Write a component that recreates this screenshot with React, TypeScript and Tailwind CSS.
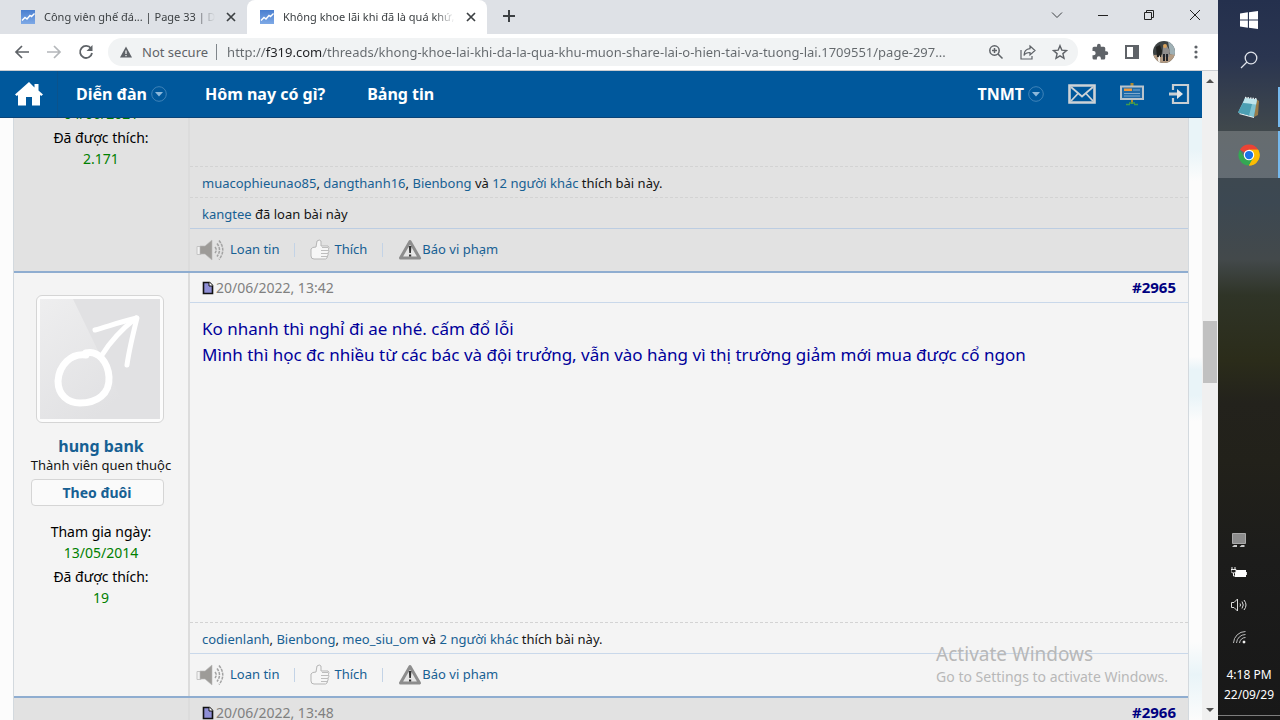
import type { ReactNode } from "react";
import { useState } from "react";

const UI = "font-['Noto_Sans','Open_Sans',sans-serif]";

const tabs = [
  { id: 1, title: "Công viên ghế đá... | Page 33 | Di", active: false },
  { id: 2, title: "Không khoe lãi khi đã là quá khứ,", active: true },
];

const url =
  "http://f319.com/threads/khong-khoe-lai-khi-da-la-qua-khu-muon-share-lai-o-hien-tai-va-tuong-lai.1709551/page-297...";

function Favicon() {
  return (
    <svg className="w-4 h-4 shrink-0" viewBox="0 0 16 16">
      <defs>
        <linearGradient id="fav" x1="0" y1="0" x2="0" y2="1">
          <stop offset="0" stopColor="#4a7fd0" />
          <stop offset="1" stopColor="#7ea9e6" />
        </linearGradient>
      </defs>
      <rect x="1" y="1" width="14" height="14" fill="url(#fav)" />
      <path d="M2 11.5 5 8.500l2 1.500 3-3.500 1.500 1L14.500 4.500" fill="none" stroke="#fff" strokeWidth="1.400" />
    </svg>
  );
}

function CloseIcon() {
  return (
    <svg className="w-3 h-3" viewBox="0 0 12 12" fill="none" stroke="#3c4043" strokeWidth="1.700">
      <path d="M2 2l8 8M10 2l-8 8" />
    </svg>
  );
}

function TabStrip() {
  return (
    <div className="h-[34px] bg-[#dee1e6] flex items-start shrink-0">
      <div className="flex h-full">
        {tabs.map((tab) => (
          <div key={tab.id}
            className={`flex items-center h-full pr-2 ${tab.active ? "w-60 pl-3 bg-white rounded-t-lg" : "w-[247px] pl-5"}`}>
            <Favicon />
            <button className="ml-2 flex-1 min-w-0 overflow-hidden whitespace-nowrap text-left text-[11px] text-[#3c4043] [mask-image:linear-gradient(90deg,#000_88%,transparent)]">
              {tab.title}
            </button>
            <button aria-label="Close tab" className="w-4 h-4 ml-2 flex items-center justify-center">
              <CloseIcon />
            </button>
          </div>
        ))}
      </div>
      <button aria-label="New tab" className="w-8 h-8 ml-1.5 flex items-center justify-center">
        <svg className="w-3.5 h-3.5" viewBox="0 0 14 14" stroke="#3c4043" strokeWidth="2"><path d="M7 1v12M1 7h12" /></svg>
      </button>
      <div className="ml-auto flex h-[29px]">
        <button aria-label="Search tabs" className="w-[46px] flex items-center justify-center">
          <svg className="w-3 h-3" viewBox="0 0 12 12" fill="none" stroke="#3c4043"><path d="M1 3.500l5 5 5-5" /></svg>
        </button>
        <button aria-label="Minimize" className="w-[46px] flex items-center justify-center">
          <svg className="w-3 h-3" viewBox="0 0 12 12" fill="none" stroke="#222"><path d="M1 6.500h10" /></svg>
        </button>
        <button aria-label="Restore" className="w-[46px] flex items-center justify-center">
          <svg className="w-3 h-3" viewBox="0 0 12 12" fill="none" stroke="#222"><path d="M1.500 3.500h7v7h-7zM3.500 3.500v-2h7v7h-2" /></svg>
        </button>
        <button aria-label="Close" className="w-[46px] flex items-center justify-center">
          <svg className="w-3 h-3" viewBox="0 0 12 12" fill="none" stroke="#222"><path d="M1 1l10 10M11 1L1 11" /></svg>
        </button>
      </div>
    </div>
  );
}

function ToolButton({ label, children }: { label: string; children: ReactNode }) {
  return (
    <button aria-label={label} className="w-8 h-7 flex items-center justify-center text-[#5f6368]">
      {children}
    </button>
  );
}

function Toolbar() {
  const [address, setAddress] = useState(url);
  return (
    <div className="h-[37px] bg-white border-b border-[#c9ccd1] flex items-center pl-1.5 pr-1.5 shrink-0">
      <ToolButton label="Back">
        <svg className="w-4 h-4" viewBox="0 0 16 16" fill="none" stroke="currentColor" strokeWidth="1.700"><path d="M15 8H2.500M8 2L2 8l6 6" /></svg>
      </ToolButton>
      <ToolButton label="Forward">
        <svg className="w-4 h-4 text-[#b4b7ba]" viewBox="0 0 16 16" fill="none" stroke="currentColor" strokeWidth="1.700"><path d="M1 8h12.500M8 2l6 6-6 6" /></svg>
      </ToolButton>
      <ToolButton label="Reload">
        <svg className="w-4 h-4" viewBox="0 0 16 16">
          <path d="M13 4.500A6 6 0 1 0 14 9" fill="none" stroke="currentColor" strokeWidth="1.800" />
          <path d="M14.500 1v6h-6z" fill="currentColor" />
        </svg>
      </ToolButton>
      <div className="ml-1.5 flex-1 min-w-0 h-7 rounded-full bg-[#f1f3f4] flex items-center pl-3 pr-0.5">
        <svg className="w-3 h-3 shrink-0" viewBox="0 0 12 12">
          <path d="M6 .5L12 11.500H0z" fill="#5f6368" />
          <path d="M5.400 4.500h1.200v3.500H5.400zM5.400 9h1.200v1.200H5.400z" fill="#fff" />
        </svg>
        <label htmlFor="address" className="ml-2.5 pr-2 border-r border-[#80868b] text-[13px] leading-4 text-[#5f6368] whitespace-nowrap">
          Not secure
        </label>
        <input id="address" value={address} onChange={(e) => setAddress(e.target.value)}
          className="ml-2.5 flex-1 min-w-0 h-6 text-[13px] outline-none text-transparent bg-clip-text bg-[linear-gradient(90deg,#63686c_38px,#202124_38px,#202124_95px,#63686c_95px)]" />
        <ToolButton label="Zoom">
          <svg className="w-4 h-4" viewBox="0 0 16 16" fill="none" stroke="currentColor" strokeWidth="1.500">
            <circle cx="6.500" cy="6.500" r="4.700" /><path d="M10 10l4.500 4.500M4 6.500h5M6.500 4v5" />
          </svg>
        </ToolButton>
        <ToolButton label="Share">
          <svg className="w-4 h-4" viewBox="0 0 16 16" fill="none" stroke="currentColor" strokeWidth="1.200">
            <path d="M1 6v9h11v-3" /><path d="M10 2l5 4.500-5 4.500V8.500C7 8.500 5 9.500 4 11.500 4 7.500 6 5 10 4.600z" />
          </svg>
        </ToolButton>
        <ToolButton label="Bookmark">
          <svg className="w-4 h-4" viewBox="0 0 16 16" fill="none" stroke="currentColor" strokeWidth="1.400">
            <path d="M8 1.700l1.800 4.400 4.700.4-3.600 3.100 1.100 4.700L8 11.800l-4 2.500 1.100-4.700L1.500 6.500l4.700-.4z" />
          </svg>
        </ToolButton>
      </div>
      <div className="ml-1.5 flex">
        <ToolButton label="Extensions">
          <svg className="w-[18px] h-[18px]" viewBox="0 0 24 24" fill="currentColor">
            <path d="M20.500 11H19V7a2 2 0 0 0-2-2h-4V3.500a2.500 2.500 0 0 0-5 0V5H4a2 2 0 0 0-2 2v3.800h1.500a2.700 2.700 0 0 1 0 5.400H2V20a2 2 0 0 0 2 2h3.800v-1.500a2.700 2.700 0 0 1 5.400 0V22H17a2 2 0 0 0 2-2v-4h1.500a2.500 2.500 0 0 0 0-5z" />
          </svg>
        </ToolButton>
        <ToolButton label="Side panel">
          <svg className="w-4 h-4" viewBox="0 0 16 16"><path d="M1 1h14v14H1zM3 3v10h6V3z" fill="currentColor" fillRule="evenodd" /></svg>
        </ToolButton>
        <ToolButton label="Profile">
          <svg className="w-[22px] h-[22px]" viewBox="0 0 22 22">
            <defs><clipPath id="face"><circle cx="11" cy="11" r="11" /></clipPath></defs>
            <g clipPath="url(#face)">
              <path d="M0 0h22v22H0z" fill="#3c4243" />
              <path d="M0 14l22-1v9H0z" fill="#b39b83" />
              <path d="M15 0h7v14l-5-1z" fill="#9fb0b5" />
              <path d="M10 6l4-1 3 5-1 6H9z" fill="#8f8d8c" />
              <path d="M3 6l4-2 2 6-1 6H4z" fill="#20211f" />
              <path d="M10 13h2v7h-2zM13 13h2v7h-2z" fill="#23252b" />
              <circle cx="12" cy="5" r="2" fill="#d9a25c" />
              <path d="M5 17l2-3v7H5z" fill="#f0ebe4" />
            </g>
          </svg>
        </ToolButton>
        <ToolButton label="Menu">
          <svg className="w-4 h-4" viewBox="0 0 16 16" fill="currentColor"><circle cx="8" cy="3" r="1.600" /><circle cx="8" cy="8" r="1.600" /><circle cx="8" cy="13" r="1.600" /></svg>
        </ToolButton>
      </div>
    </div>
  );
}

function DropArrow() {
  return (
    <svg className="w-4 h-4" viewBox="0 0 16 16">
      <circle cx="8" cy="8" r="7.300" fill="none" stroke="#3f83b8" />
      <path d="M4 6h8l-4 4.500z" fill="#8db8da" />
    </svg>
  );
}

function NavBar() {
  return (
    <nav className="h-[47px] bg-[#00589c] border-b border-[#0a4478] flex items-center shrink-0 text-white font-bold text-base">
      <a href="#home" aria-label="Trang chủ" className="w-[58px] h-full flex items-center justify-center border-r border-[#0a538d]">
        <svg className="w-7 h-6" viewBox="0 0 28 24" fill="#fff">
          <path d="M14 0L0 12.500l1.800 1.500L3 13v10.500h8V15h6v8.500h8V13l1.200 1 1.800-1.500-4.500-4V2h-4v3.500z" />
        </svg>
      </a>
      <a href="#forum" className="ml-[18px] flex items-center gap-1">Diễn đàn <DropArrow /></a>
      <a href="#today" className="ml-[38px]">Hôm nay có gì?</a>
      <a href="#news" className="ml-[42px]">Bảng tin</a>
      <a href="#account" className="ml-auto flex items-center gap-1">TNMT <DropArrow /></a>
      <a href="#inbox" aria-label="Hộp thư" className="ml-6">
        <svg className="w-7 h-5" viewBox="0 0 28 20" fill="none" stroke="#cdd2d6">
          <path d="M1.500 1.500h25v17h-25z" strokeWidth="2.600" />
          <path d="M3 3l11 9.500L25 3M3 17l7-7.500M25 17l-7-7.500" strokeWidth="1.800" />
        </svg>
      </a>
      <a href="#alerts" aria-label="Thông báo" className="ml-6">
        <svg className="w-6 h-6" viewBox="0 0 24 24">
          <path d="M10.500 1h3v3h-3zM11 17h2v5h-2z" fill="#b08a2e" />
          <path d="M1 4.500h22v12.500H1z" fill="#1f6aa8" stroke="#b9c4cc" strokeWidth="2" />
          <path d="M4 6.500h8v2.500H4z" fill="#f09a3e" />
          <path d="M4 11.500h16M4 14h16M13 8h7" stroke="#7fa9cc" />
          <path d="M6 22.500h4M14 22.500h4M9 21h6" stroke="#3f9a4d" strokeWidth="1.500" />
        </svg>
      </a>
      <a href="#logout" aria-label="Thoát" className="ml-6 mr-3">
        <svg className="w-[22px] h-[22px]" viewBox="0 0 22 22" fill="none" stroke="#c9ced2" strokeWidth="2.200">
          <path d="M5 7V2h15v18H5v-5" />
          <path d="M1 11h9" strokeWidth="3" /><path d="M9 6l6 5-6 5z" fill="#e3e5e7" stroke="none" />
        </svg>
      </a>
    </nav>
  );
}

function Speaker() {
  return (
    <svg className="w-8 h-[22px]" viewBox="0 0 32 22">
      <path d="M1 7.500h4v8H1z" fill="#f2f2f2" stroke="#c4c4c4" />
      <path d="M4 7h5l7-6v20l-7-6H4z" fill="#9d9b98" stroke="#b9b9b9" strokeWidth=".6" />
      <path d="M19 8q2.500 3 0 6M21 4.500q5 6.500 0 13M23 1.500q7.500 9.500 0 19" fill="none" stroke="#a3a3a3" strokeWidth="1.500" strokeDasharray="3 1" />
    </svg>
  );
}

function Thumb() {
  return (
    <svg className="w-5 h-[22px]" viewBox="0 0 20 22" fill="#f6f6f6" stroke="#b5b5b5">
      <path d="M1 10q1-2 5-2L7 2q2.500-2 4 0v5h7q1.500 1 .5 3.500 1 2-.5 3.500.5 2-.5 3 0 2.500-2 3H4q-3 0-3-3z" />
      <path d="M12 8.500h6M11 11.500h7.500M11 14.500h7M11 17.500h6.500" stroke="#bdbdbd" />
    </svg>
  );
}

function Warning() {
  return (
    <svg className="w-6 h-[22px]" viewBox="0 0 24 22">
      <path d="M12 2.500l9.500 16.500h-19z" fill="#e6e6e6" stroke="#8d8d8d" strokeWidth="3" strokeLinejoin="round" />
      <path d="M10.800 7h2.600l-.5 7h-1.600zM11 15.500h2.200v2H11z" fill="#333" />
    </svg>
  );
}

function Actions() {
  return (
    <div className="h-[42px] flex items-center pl-1.5 text-[13px]">
      <button className="flex items-center gap-0.5 whitespace-nowrap"><Speaker />Loan tin</button>
      <span className="w-px h-3.5 bg-[#c3d3e6] mx-[15px]" />
      <button className="flex items-center gap-1 whitespace-nowrap"><Thumb />Thích</button>
      <span className="w-px h-3.5 bg-[#c3d3e6] mx-[15px]" />
      <button className="flex items-center whitespace-nowrap"><Warning />Báo vi phạm</button>
    </div>
  );
}

function Likes({ names, others }: { names: string[]; others: string }) {
  return (
    <p className="h-[30px] leading-8 text-[13px] text-[#141414] whitespace-nowrap">
      {names.map((n, i) => (
        <span key={n}>
          <a href={"#" + n} className="text-[#176093]">{n}</a>
          {i < names.length - 1 && ", "}
        </span>
      ))}
      {" và "}
      <a href="#likes" className="text-[#176093]">{others}</a> thích bài này.
    </p>
  );
}

function PostHead({ date, number }: { date: string; number: string }) {
  return (
    <div className="h-[30px] flex items-center pl-3 pr-3 border-b border-[#c9d8ea]">
      <svg className="w-3 h-3.5" viewBox="0 0 12 14">
        <path d="M1.500 1.500h6l3 3v8h-9z" fill="#8f8fd6" stroke="#111" strokeWidth="1.600" />
        <path d="M7 1v4h4" fill="#fff" stroke="#111" />
      </svg>
      <span className="ml-0.5 text-sm text-[#808080]">{date}</span>
      <a href={number} className="ml-auto text-[15px] font-bold text-[#000080]">{number}</a>
    </div>
  );
}

function MaleAvatar() {
  return (
    <div className="w-32 h-32 p-[3px] bg-[#fcfcfc] border border-[#d5d5d5] rounded-md">
      <svg className="w-full h-full" viewBox="0 0 120 120">
        <defs>
          <linearGradient id="shine" x1="0" y1="0" x2="0.600" y2="1">
            <stop offset="0" stopColor="#eeeeef" />
            <stop offset="1" stopColor="#e1e1e3" />
          </linearGradient>
        </defs>
        <path d="M0 0h120v120H0z" fill="#e1e1e3" />
        <path d="M0 0h33l58 120H0z" fill="url(#shine)" />
        <g fill="none" stroke="#fff" strokeLinecap="round" strokeLinejoin="round">
          <path d="M46 56C31 54 19 66 18 82c0 14 10 22 22 22 17 0 30-9 29-26-1-15-11-27-23-24" strokeWidth="7" />
          <path d="M62 56c8-13 20-26 34-37" strokeWidth="5" />
          <path d="M55 31c14-4 28-9 42-12-4 16-8 32-10 47" strokeWidth="5" />
        </g>
      </svg>
    </div>
  );
}

function TaskBar() {
  return (
    <aside className="w-[62px] shrink-0 flex flex-col bg-[linear-gradient(#24304d,#2a3550_8%,#40484c_18%,#3c4852_28%,#43494b_36%,#2f3427_41%,#2b2c1a_50%,#23221c_56%,#22211a_64%,#1c1c1b_78%,#181818)] text-white">
      <button aria-label="Start" className="h-10 flex items-center justify-center">
        <svg className="w-[18px] h-[18px]" viewBox="0 0 16 16" fill="#fff"><path d="M0 2.200L7 1.200v6.300H0zM8 1.100L16 0v7.500H8zM0 8.500h7v6.300L0 13.800zM8 8.500h8V16l-8-1.100z" /></svg>
      </button>
      <button aria-label="Search" className="h-10 flex items-center justify-center">
        <svg className="w-[18px] h-[18px]" viewBox="0 0 18 18" fill="none" stroke="#dfe3ea" strokeWidth="1.300"><circle cx="11" cy="7" r="5.800" /><path d="M7 11l-6 6" /></svg>
      </button>
      <button aria-label="Notepad" className="mt-[7px] h-10 pl-0.5 flex items-center justify-center border-r-2 border-[#76b9ed]">
        <svg className="w-6 h-6" viewBox="0 0 24 24">
          <path d="M19 4l3 2-1 14-4 2z" fill="#9a7b48" />
          <path d="M3 18l14 3.500V23L2 19z" fill="#e8eef0" />
          <path d="M8 3l12 1.500L17 22 1 17.500z" fill="#7fc4d3" />
          <path d="M8 3l12 1.500-1 5L6 8z" fill="#bfe5ec" />
          <path d="M6 8l9 1-3 11.500-11-3z" fill="#4c9fb3" />
          <path d="M8 2.500l12 1.500" stroke="#e9f1f3" strokeWidth="1.500" strokeDasharray="1.500 1" />
        </svg>
      </button>
      <button aria-label="Chrome" className="mt-1 h-[47px] pl-0.5 flex items-center justify-center bg-white/20 border-r-2 border-[#76b9ed]">
        <svg className="w-[22px] h-[22px]" viewBox="0 0 48 48">
          <path d="M24 24L4.080 12.500A23 23 0 0 1 43.920 12.500z" fill="#ea4335" />
          <path d="M24 24V12.500h19.920A23 23 0 0 1 24 47z" fill="#fbbc04" />
          <path d="M24 24l10 5.700L24 47A23 23 0 0 1 4.080 12.500L14 29.700z" fill="#34a853" />
          <path d="M24 12.500h19.920A23 23 0 0 1 24 47l10-17.300z" fill="#fbbc04" />
          <circle cx="24" cy="24" r="11.500" fill="#fff" />
          <circle cx="24" cy="24" r="9" fill="#1a73e8" />
        </svg>
      </button>
      <div className="mt-auto pl-[13px] flex flex-col gap-4">
        <button aria-label="Touchpad" className="w-4 h-4">
          <svg className="w-4 h-4" viewBox="0 0 16 16"><path d="M1.500.5h13v10h-13z" fill="#8c8c8c" stroke="#a9a9a9" /><path d="M1 14l2-2h3v2zM8.500 14l2-2h3v2z" fill="#c9c9c9" /></svg>
        </button>
        <button aria-label="Battery" className="w-4 h-4">
          <svg className="w-4 h-4" viewBox="0 0 16 16"><path d="M4 5h11v7H4z" fill="#fff" /><path d="M15 7h1v3h-1z" fill="#ddd" /><path d="M1 2v2.500M4 2v2.500M0 4.500h5v2L3.500 8H1.500L0 6.500zM2.500 8v3H4" fill="#1d1d1d" stroke="#eee" /></svg>
        </button>
        <button aria-label="Volume" className="w-4 h-4">
          <svg className="w-4 h-4" viewBox="0 0 16 16" fill="none" stroke="#ddd"><path d="M.500 5.500H3l3.500-3.500v12L3 10.500H.500zM9 6.500q1 1.500 0 3M11 4.500q2.500 3.500 0 7M13 3q4 5 0 10" /></svg>
        </button>
        <button aria-label="Wi-Fi" className="w-4 h-4">
          <svg className="w-4 h-4" viewBox="0 0 16 16" fill="none" stroke="#bdbdbd"><path d="M2.500 14A12 12 0 0 1 14.500 2.500M5.500 14A9 9 0 0 1 14.500 5.500M8.500 14A6 6 0 0 1 14.500 8.500" /><circle cx="13" cy="13" r="1" fill="#fff" stroke="#fff" /></svg>
        </button>
      </div>
      <div className="mt-5 text-center text-xs leading-5">
        <div>4:18 PM</div>
        <div>22/09/29</div>
      </div>
      <button aria-label="Show desktop" className="mt-[10px] h-[5px] border-t border-[#7d7d7d]" />
    </aside>
  );
}

const userCol = "w-44 shrink-0 border-r-2 border-[#dcdcdc] text-center text-sm";

export default function App() {
  return (
    <div className={`${UI} h-screen flex overflow-hidden`}>
      <div className="flex-1 min-w-0 flex flex-col">
        <TabStrip />
        <Toolbar />
        <div className="flex-1 min-h-0 flex">
          <div className="flex-1 min-w-0 flex flex-col relative bg-[#fcfcfc] bg-[linear-gradient(#e9f4f8_12%,#fcfcfc_17%,#fcfcfc_44%,#e9f4f8_46%,#e9f4f8_50%,#fcfcfc_54%,#fcfcfc_88%,#e9f4f8_93%,#fcfcfc)] bg-[length:14px_100%] bg-right bg-no-repeat">
            <NavBar />
            <main className="flex-1 min-h-0 overflow-hidden mx-[13px] border-x border-[#d3d9de] text-[#176093]">
              <article className="-mt-[15px] h-[170px] flex bg-[#e2e2e2] border-b-2 border-[#8fadd0]">
                <dl className={userCol}>
                  <dd className="h-[21px] leading-[21px] mb-[3px] text-[#008000]">04/06/2021</dd>
                  <dt className="h-[21px] leading-[21px] text-black">Đã được thích:</dt>
                  <dd className="h-[21px] leading-[21px] text-[#008000]">2.171</dd>
                </dl>
                <div className="flex-1 min-w-0 flex flex-col justify-end">
                  <div className="pl-3 border-t border-dashed border-[#d3d3d3]">
                    <Likes names={["muacophieunao85", "dangthanh16", "Bienbong"]} others="12 người khác" />
                  </div>
                  <p className="pl-3 h-[31px] leading-8 text-[13px] border-t border-dashed border-[#d3d3d3] text-[#141414]">
                    <a href="#kangtee" className="text-[#176093]">kangtee</a> đã loan bài này
                  </p>
                  <div className="border-t border-[#bccde2]"><Actions /></div>
                </div>
              </article>

              <article className="flex bg-[#f4f4f4] border-b-2 border-[#8fadd0]">
                <div className={`${userCol} flex flex-col items-center pt-[22px]`}>
                  <a href="#avatar" aria-label="hung bank" className="mr-0.5"><MaleAvatar /></a>
                  <a href="#user" className="mt-3 font-bold text-base leading-[22px]">hung bank</a>
                  <em className="not-italic text-[13px] leading-4 text-[#141414] whitespace-nowrap">Thành viên quen thuộc</em>
                  <button className="mt-1.5 mr-2 w-[133px] h-[27px] bg-[#fafafa] border border-[#d5d5d5] rounded-sm font-bold">Theo đuôi</button>
                  <dl className="mt-[15px]">
                    <dt className="h-[21px] leading-[21px] text-black">Tham gia ngày:</dt>
                    <dd className="h-[21px] leading-[21px] mb-[3px] text-[#008000]">13/05/2014</dd>
                    <dt className="h-[21px] leading-[21px] text-black">Đã được thích:</dt>
                    <dd className="h-[21px] leading-[21px] text-[#008000]">19</dd>
                  </dl>
                </div>
                <div className="flex-1 min-w-0">
                  <PostHead date="20/06/2022, 13:42" number="#2965" />
                  <blockquote className="min-h-[319px] px-3 pt-[13px] text-[17px] leading-[26px] text-[#00009a]">
                    Ko nhanh thì nghỉ đi ae nhé. cấm đổ lỗi<br />
                    Mình thì học đc nhiều từ các bác và đội trưởng, vẫn vào hàng vì thị trường giảm mới mua được cổ ngon
                  </blockquote>
                  <div className="pl-3 border-t border-dashed border-[#d3d3d3]">
                    <Likes names={["codienlanh", "Bienbong", "meo_siu_om"]} others="2 người khác" />
                  </div>
                  <div className="border-t border-[#c9d8ea]"><Actions /></div>
                </div>
              </article>

              <article className="flex bg-[#e2e2e2]">
                <div className={userCol} />
                <div className="flex-1 min-w-0"><PostHead date="20/06/2022, 13:48" number="#2966" /></div>
              </article>
            </main>
            <div className="absolute right-[34px] bottom-8 text-[#b8b8b8] pointer-events-none">
              <div className="text-[19px] leading-6">Activate Windows</div>
              <div className="text-sm leading-[22px]">Go to Settings to activate Windows.</div>
            </div>
          </div>
          <div className="w-4 shrink-0 bg-[#f0f0f0] flex flex-col items-center py-1.5">
            <svg className="w-2 h-2" viewBox="0 0 8 8" fill="#505050"><path d="M4 2l4 4H0z" /></svg>
            <div className="flex-[236] min-h-0" />
            <div className="w-3.5 flex-[62] bg-[#c1c1c1]" />
            <div className="flex-[322] min-h-0" />
            <svg className="w-2 h-2" viewBox="0 0 8 8" fill="#505050"><path d="M0 2h8L4 6z" /></svg>
          </div>
        </div>
      </div>
      <TaskBar />
    </div>
  );
}
